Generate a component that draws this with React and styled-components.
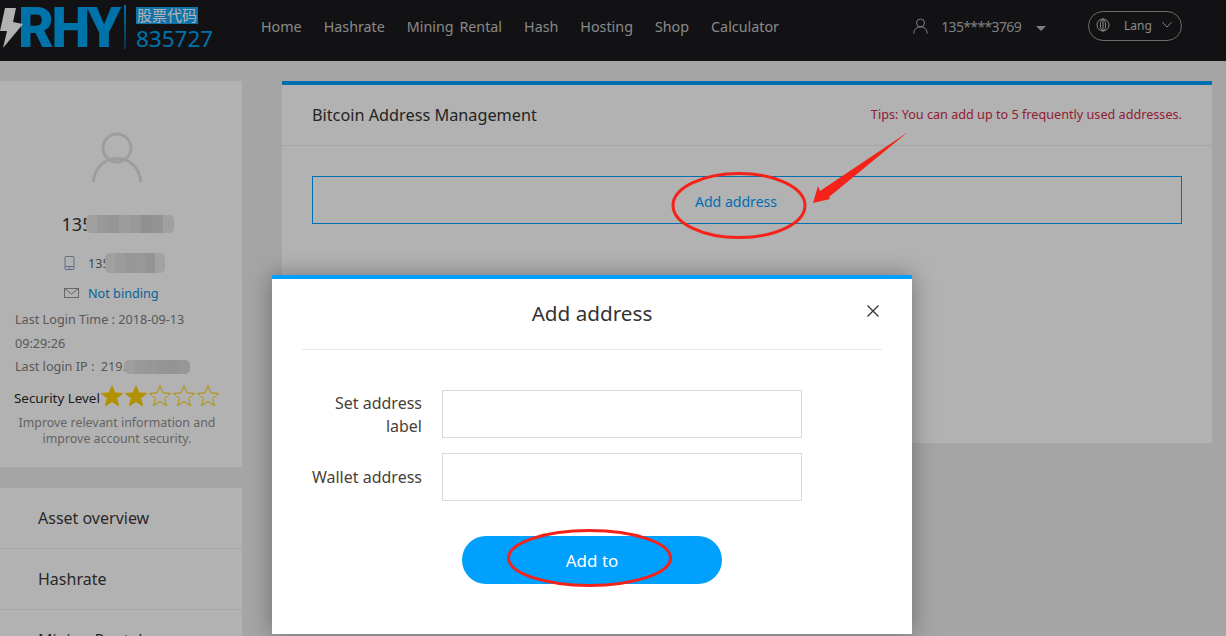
import React from 'react'
import styled, { createGlobalStyle } from 'styled-components'

const GlobalStyle = createGlobalStyle`
html,body{
    margin:0;
    padding:0;
    height:100%;
    overflow:hidden;
    background:#ededed;
}
body{
    font-family:'Noto Sans','Noto Sans CJK SC',sans-serif;
}
*{box-sizing:border-box;}
`

const Page = styled.div`
width:1226px;
height:636px;
overflow:hidden;
position:relative;
background:#ededed;
`

const Header = styled.header`
height:61px;
background:#1a1b1e;
display:flex;
align-items:flex-start;
padding-right:44px;
isolation:isolate;
`
const Logo = styled.div`
width:261px;
height:61px;
display:flex;
align-items:flex-start;
padding-top:8px;
flex:none;
`
const Bolt = styled.svg`
flex:none;
position:relative;
z-index:1;
`
const LogoWord = styled.span`
font-family:'Roboto',sans-serif;
font-weight:900;
font-size:55px;
line-height:40px;
letter-spacing:-2.5px;
color:#00a4f4;
margin-left:-6px;
width:106px;
white-space:nowrap;
`
const LogoRule = styled.i`
width:2px;
height:44px;
margin:-3px 10px 0 0;
background:linear-gradient(#00a4f4,#0a4a6c);
`
const Stock = styled.div`
display:flex;
flex-direction:column;
align-items:flex-start;
margin-top:-1px;
`
const StockTag = styled.span`
font-size:15px;
line-height:17px;
color:#fff;
background:#18a4f4;
padding:0 1px;
`
const StockCode = styled.span`
font-size:22.5px;
line-height:29px;
color:#00a4f4;
`
const Nav = styled.nav`
display:flex;
gap:22px;
height:52px;
align-items:center;
`
const NavItem = styled.a`
font-size:14.3px;
word-spacing:2px;
color:#c4c4c4;
white-space:nowrap;
`
const HeaderRight = styled.div`
margin-left:auto;
display:flex;
align-items:center;
height:52px;
`
const UserName = styled.span`
font-size:14px;
letter-spacing:-.65px;
color:#b4b8bc;
margin:0 10px 0 13px;
`
const Caret = styled.i`
width:0;
height:0;
border-left:5px solid transparent;
border-right:5px solid transparent;
border-top:5px solid #b4b8bc;
margin:4px 42px 0 5px;
`
const LangPill = styled.div`
width:94px;
height:30px;
border:1px solid #9a9a9a;
border-radius:15px;
display:flex;
align-items:center;
padding:0 9px 2px 7px;
color:#c4c4c4;
font-size:12px;
`
const LangText = styled.span`
margin:0 10px 0 14px;
`

const Body = styled.div`
display:flex;
align-items:flex-start;
margin:20px 0 0 -8px;
gap:40px;
`
const Side = styled.aside`
width:250px;
flex:none;
`
const Profile = styled.section`
background:#fff;
height:386px;
padding:50px 0 0 23px;
font-size:12.65px;
color:#666;
`
const Avatar = styled.div`
display:flex;
justify-content:center;
margin-left:-23px;
height:52px;
`
const Name = styled.div`
display:flex;
justify-content:center;
align-items:center;
margin:29px 0 0 -21px;
height:24px;
font-size:18px;
color:#333;
`
const ContactRow = styled.div`
display:flex;
align-items:center;
height:20px;
padding-left:49px;
margin-top:${props => props.$top}px;
`
const ContactIcon = styled.span`
width:24px;
flex:none;
display:flex;
`
const BindLink = styled.a`
color:#0a8fdc;
`
const Info = styled.div`
line-height:23.5px;
margin-top:5px;
width:200px;
color:#808080;
`
const InfoLine = styled.div`
display:flex;
align-items:center;
white-space:nowrap;
`
const Mosaic = styled.span`
display:inline-flex;
margin-left:${props => props.$shift}px;
border-radius:5px;
overflow:hidden;
filter:blur(.6px);
flex:none;
`
const MosaicCell = styled.i`
display:block;
width:${props => props.$w}px;
height:${props => props.$h}px;
background:${props => props.$c};
`
const Security = styled.div`
display:flex;
align-items:center;
height:26px;
margin:6px 0 0 -1px;
color:#2a2a2a;
font-size:13.4px;
`
const Stars = styled.div`
display:flex;
margin:-3px 0 0;
`
const Improve = styled.p`
margin:4px 0 0 -23px;
text-align:center;
font-size:12.4px;
color:#909090;
line-height:16px;
padding:0 16px;
`
const Menu = styled.ul`
list-style:none;
margin:21px 0 0;
padding:0;
background:#fff;
`
const MenuItem = styled.li`
height:61px;
padding-left:46px;
line-height:60px;
font-size:16px;
color:#3a3a3a;
border-bottom:1px solid #eeeeee;
`

const Panel = styled.main`
width:930px;
height:362px;
background:#fff;
border-top:4px solid #00a0ff;
`
const PanelHead = styled.div`
height:61px;
border-bottom:1px solid #ededed;
display:flex;
justify-content:space-between;
align-items:center;
padding:0 30px;
`
const PanelTitle = styled.h2`
margin:0;
font-size:16.25px;
font-weight:400;
color:#333;
`
const Tips = styled.span`
font-size:12.65px;
color:#cf2d4a;
padding-bottom:2px;
`
const AddBox = styled.div`
margin:30px 30px 0;
height:48px;
border:1px solid #00a0ff;
display:flex;
align-items:center;
justify-content:center;
padding:3px 22px 0 0;
color:#00a0ff;
font-size:14.1px;
`

const Overlay = styled.div`
position:absolute;
inset:0;
background:rgba(0,0,0,.3);
`
const Modal = styled.div`
position:absolute;
left:272px;
top:275px;
width:640px;
height:359px;
background:#fff;
border-top:4px solid #00a0ff;
box-shadow:0 0 22px rgba(0,0,0,.35);
padding:0 30px;
`
const ModalHead = styled.div`
height:71px;
border-bottom:1px solid #e8e8e8;
display:flex;
align-items:center;
justify-content:center;
position:relative;
padding-bottom:2px;
`
const ModalTitle = styled.h3`
margin:0;
font-size:20.7px;
font-weight:400;
color:#333;
`
const Close = styled.span`
position:absolute;
right:3px;
top:26px;
display:flex;
`
const FormRow = styled.div`
display:flex;
align-items:center;
gap:20px;
margin-top:${props => props.$top}px;
`
const Label = styled.label`
width:120px;
text-align:right;
font-size:16px;
line-height:23px;
color:#4a3f38;
padding-top:1px;
`
const Field = styled.input`
width:360px;
height:48px;
border:1px solid #d9d9d9;
background:#fff;
outline:none;
`
const Submit = styled.button`
display:block;
width:260px;
height:48px;
margin:35px 0 0 160px;
padding:1px 0 0;
border:0;
border-radius:24px;
background:#00a0ff;
color:#fff;
font-family:inherit;
font-size:17px;
`
const Marks = styled.svg`
position:absolute;
left:0;
top:0;
pointer-events:none;
`

const NAV = ['Home', 'Hashrate', 'Mining Rental', 'Hash', 'Hosting', 'Shop', 'Calculator']
const MENU = ['Asset overview', 'Hashrate', 'Mining Rental']

const NAME_BLUR = ['#e4e4e4', '#dcdcdc', '#d6d6d6', '#e0e0e0', '#dcdcdc', '#cfcdcd', '#d4d4d4', '#e6e6e6']
const PHONE_BLUR = ['#e6e6e6', '#dfdfdf', '#d8d8d8', '#dcdcdc', '#d4d4d4', '#e8e8e8']
const IP_BLUR = ['#e2e2e2', '#dcdcdc', '#d8d8d8', '#d6d6d6', '#d4d4d4', '#d8d8d8']

const Blur = ({ cells, w, h, shift }) => (
    <Mosaic $shift={shift}>
        {cells.map((c, i) => <MosaicCell key={i} $c={c} $w={w} $h={h} />)}
    </Mosaic>
)

const Star = ({ filled }) => (
    <svg width="24" height="24" viewBox="0 0 24 24">
        <path
            d="M12 1.8l2.9 7.1 7.6.5-5.9 4.9 1.9 7.4L12 17.6l-6.5 4.1 1.9-7.4-5.9-4.9 7.6-.5z"
            fill={filled ? '#ffd000' : 'none'}
            stroke="#ffd000"
            strokeWidth="1"
        />
    </svg>
)

const App = () => {
    return (
        <Page>
            <GlobalStyle />
            <Header>
                <Logo>
                    <Bolt width="24" height="40" viewBox="0 0 24 40">
                        <path d="M5 0h11l-3 14 10 2L3 40l4-17H0z" fill="#fff" />
                    </Bolt>
                    <LogoWord>RHY</LogoWord>
                    <LogoRule />
                    <Stock>
                        <StockTag>股票代码</StockTag>
                        <StockCode>835727</StockCode>
                    </Stock>
                </Logo>
                <Nav>
                    {NAV.map(n => <NavItem key={n}>{n}</NavItem>)}
                </Nav>
                <HeaderRight>
                    <svg width="15" height="16" viewBox="0 0 15 16" fill="none" stroke="#b4b8bc" strokeWidth="1">
                        <circle cx="7.5" cy="5" r="4" />
                        <path d="M.7 15.5a6.8 6.8 0 0 1 13.6 0" />
                    </svg>
                    <UserName>135****3769</UserName>
                    <Caret />
                    <LangPill>
                        <svg width="14" height="14" viewBox="0 0 14 14" fill="none" stroke="#c4c4c4" strokeWidth="1">
                            <circle cx="7" cy="7" r="6" />
                            <ellipse cx="7" cy="7" rx="2.6" ry="6" />
                            <path d="M7 1v12" />
                        </svg>
                        <LangText>Lang</LangText>
                        <svg width="10" height="6" viewBox="0 0 10 6" fill="none" stroke="#c4c4c4" strokeWidth="1">
                            <path d="M.5.5L5 5 9.5.5" />
                        </svg>
                    </LangPill>
                </HeaderRight>
            </Header>

            <Body>
                <Side>
                    <Profile>
                        <Avatar>
                            <svg width="50" height="52" viewBox="0 0 50 52" fill="none" stroke="#dfe2e7" strokeWidth="3">
                                <circle cx="25" cy="17" r="14" />
                                <path d="M1.5 51a23.5 23.5 0 0 1 47 0" />
                            </svg>
                        </Avatar>
                        <Name>135<Blur cells={NAME_BLUR} w={11} h={18} shift={-6} /></Name>
                        <ContactRow $top={17}>
                            <ContactIcon>
                                <svg width="11" height="14" viewBox="0 0 11 14" fill="none" stroke="#8aa0c0" strokeWidth="1">
                                    <rect x="1" y=".5" width="9" height="13" rx="1" />
                                    <path d="M1 10.5h9M4.5 12h2" />
                                </svg>
                            </ContactIcon>
                            135<Blur cells={PHONE_BLUR} w={10} h={20} shift={-5} />
                        </ContactRow>
                        <ContactRow $top={10}>
                            <ContactIcon>
                                <svg width="15" height="10" viewBox="0 0 15 10" fill="none" stroke="#959595" strokeWidth="1">
                                    <rect x=".5" y=".5" width="14" height="9" />
                                    <path d="M.5.5L7.5 6l7-5.5" />
                                </svg>
                            </ContactIcon>
                            <BindLink>Not binding</BindLink>
                        </ContactRow>
                        <Info>
                            <InfoLine>Last Login Time : 2018-09-13</InfoLine>
                            <InfoLine>09:29:26</InfoLine>
                            <InfoLine>Last login IP :&nbsp;&nbsp;219.<Blur cells={IP_BLUR} w={11} h={14} shift={-2} /></InfoLine>
                        </Info>
                        <Security>
                            Security Level
                            <Stars>
                                <Star filled />
                                <Star filled />
                                <Star />
                                <Star />
                                <Star />
                            </Stars>
                        </Security>
                        <Improve>Improve relevant information and improve account security.</Improve>
                    </Profile>
                    <Menu>
                        {MENU.map(m => <MenuItem key={m}>{m}</MenuItem>)}
                    </Menu>
                </Side>
                <Panel>
                    <PanelHead>
                        <PanelTitle>Bitcoin Address Management</PanelTitle>
                        <Tips>Tips: You can add up to 5 frequently used addresses.</Tips>
                    </PanelHead>
                    <AddBox>Add address</AddBox>
                </Panel>
            </Body>

            <Overlay />
            <Modal>
                <ModalHead>
                    <ModalTitle>Add address</ModalTitle>
                    <Close>
                        <svg width="12" height="12" viewBox="0 0 12 12" stroke="#333" strokeWidth="1.3">
                            <path d="M.5.5l11 11M11.5.5l-11 11" />
                        </svg>
                    </Close>
                </ModalHead>
                <FormRow $top={40}>
                    <Label>Set address label</Label>
                    <Field />
                </FormRow>
                <FormRow $top={15}>
                    <Label>Wallet address</Label>
                    <Field />
                </FormRow>
                <Submit>Add to</Submit>
            </Modal>

            <Marks width="1226" height="636" viewBox="0 0 1226 636">
                <ellipse cx="739" cy="205.5" rx="66" ry="32" fill="none" stroke="#f5221a" strokeWidth="3" />
                <ellipse cx="589.5" cy="558" rx="81" ry="27.5" fill="none" stroke="#f5221a" strokeWidth="3" />
                <polygon points="908,132 820,191 818,186 813,203 830,199 829,197" fill="#f5221a" />
            </Marks>
        </Page>
    )
}

export default App
